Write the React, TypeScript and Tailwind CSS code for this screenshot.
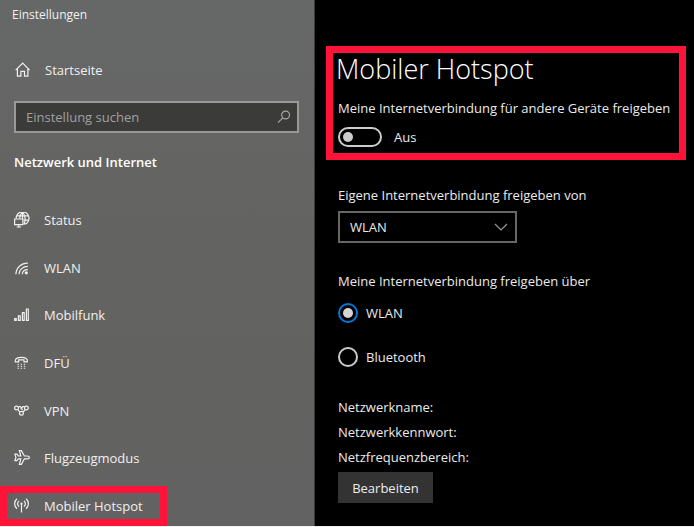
import { useState, type ReactNode } from "react";

function Icon({ children }: { children: ReactNode }) {
  return (
    <svg
      aria-hidden="true"
      viewBox="0 0 16 16"
      className="size-4 shrink-0"
      fill="none"
      stroke="currentColor"
      strokeWidth="1.2"
    >
      {children}
    </svg>
  );
}

const HomeIcon = () => (
  <Icon>
    <path d="M1.7 8.2 8.7 1.2 15.6 8.2M3.4 6.5V14.2H6.9V9.4H10.5V14.2H13.9V6.5" />
  </Icon>
);

const StatusIcon = () => (
  <Icon>
    <path d="M2.2 6.6A6.4 6.4 0 1 1 10.8 12.2M2.8 3.9H14M9.5 8.2H14.6M8.3.4C6.3 2 5.7 3.8 5.6 6.8M8.7.4C11.4 3 11.8 8.4 10 12.6M8.5.4V6.8" />
    <path d="M.6 7H8.9V12.6H.6zM4.8 12.8v2M2.6 15H7" />
  </Icon>
);

const WifiIcon = () => (
  <Icon>
    <path d="M1.9 14.3C2.2 7.8 7 3.1 13.8 3.1M5 14.3C5.2 9.6 8.8 6.4 13.8 6.4M8.3 14.3C8.5 11.6 10.6 9.6 13.8 9.6" />
    <circle cx="12.3" cy="12.8" r="1.6" fill="currentColor" stroke="none" />
  </Icon>
);

const SignalIcon = () => (
  <Icon>
    <path d="M.7 11.7H2.2V13.3H.7zM4.4 8.9H6.2V13.3H4.4zM8.4 5.7H10.2V13.3H8.4zM12.4 2H14.3V13.3H12.4z" />
  </Icon>
);

const DialIcon = () => (
  <Icon>
    <path d="M1.3 5.6C1.3 1.2 13.3 1.2 13.3 5.6V6.8H10V4.9H4.7V6.8H1.3z" />
    <path
      d="M3.6 9.3H4.9M6.7 9.3H8M9.8 9.3H11.1M3.6 11.3H4.9M6.7 11.3H8M9.8 11.3H11.1M3.6 13.3H4.9M6.7 13.3H8M9.8 13.3H11.1"
      strokeWidth="1.1"
    />
  </Icon>
);

const VpnIcon = () => (
  <Icon>
    <circle cx="2.5" cy="5" r="1.9" />
    <circle cx="12.4" cy="5" r="1.9" />
    <circle cx="7.4" cy="10.2" r="1.9" />
    <path d="M4.4 3.6H6.2L8.6 6.8M4 6.6 5.7 9M6.6 6 8.8 3.6H10.6M9.1 9 11 6.8" />
  </Icon>
);

const PlaneIcon = () => (
  <Icon>
    <path d="M5.4.6H7.4L10.4 6H13.4C16 6 16 8.8 13.4 8.8H10.4L7.4 14.4H5.4L6.8 8.8H4.4L2.8 10.6H.9L1.9 7.4.9 4.2H2.8L4.4 6H6.8z" />
  </Icon>
);

const HotspotIcon = () => (
  <Icon>
    <path d="M3 .7C-.2 3.4-.2 8 3 10.7M5 2.8C3.2 4.6 3.2 6.8 5 8.6M12 .7C15.2 3.4 15.2 8 12 10.7M10 2.8C11.8 4.6 11.8 6.8 10 8.6M7.5 5.8V14.6" />
    <circle cx="7.5" cy="5.7" r="1.1" fill="currentColor" stroke="none" />
  </Icon>
);

const navItems = [
  { label: "Status", icon: <StatusIcon /> },
  { label: "WLAN", icon: <WifiIcon /> },
  { label: "Mobilfunk", icon: <SignalIcon /> },
  { label: "DFÜ", icon: <DialIcon /> },
  { label: "VPN", icon: <VpnIcon /> },
  { label: "Flugzeugmodus", icon: <PlaneIcon /> },
  { label: "Mobiler Hotspot", icon: <HotspotIcon />, active: true },
];

function Sidebar() {
  return (
    <aside className="flex w-[315px] shrink-0 flex-col border-r border-[#3c3c3c] bg-linear-to-b from-[#666867] via-[#636361] to-[#626262] text-[#f0f0f0]">
      <div className="px-3 pt-[5px] text-[12px] leading-5">Einstellungen</div>
      <a href="#start" className="mt-[35px] flex h-5 items-center gap-[15px] pl-[14px]">
        <HomeIcon />
        Startseite
      </a>
      <form className="mr-[15px] ml-[14px] mt-[21px] flex h-8 items-center border-2 border-[#999999] bg-[#3b3b3a] pr-1.5 pl-[10px] text-[#a8a8a8]">
        <input
          type="search"
          aria-label="Einstellung suchen"
          placeholder="Einstellung suchen"
          className="min-w-0 flex-1 bg-transparent outline-none placeholder:text-[#a0a0a0]"
        />
        <svg
          aria-hidden="true"
          viewBox="0 0 14 14"
          className="size-3.5"
          fill="none"
          stroke="currentColor"
          strokeWidth="1.2"
        >
          <circle cx="8.6" cy="5" r="3.9" />
          <path d="M5.8 7.8 1 12.6" />
        </svg>
      </form>
      <h2 className="mt-[19px] pl-[14px] leading-5 font-semibold text-white">
        Netzwerk und Internet
      </h2>
      <nav aria-label="Netzwerk und Internet" className="mt-7 flex flex-1">
        <ul className="flex flex-1 flex-col justify-between">
          {navItems.map((item) => (
            <li key={item.label}>
              <a
                href="#"
                aria-current={item.active ? "page" : undefined}
                className={
                  item.active
                    ? "flex h-10 w-[167px] items-center gap-[14px] border-7 border-[#ff1439] pl-[7px] whitespace-nowrap"
                    : "flex h-10 items-center gap-[14px] pl-[14px]"
                }
              >
                {item.icon}
                {item.label}
              </a>
            </li>
          ))}
        </ul>
      </nav>
    </aside>
  );
}

function Radio({
  label,
  checked,
  onChange,
}: {
  label: string;
  checked: boolean;
  onChange: () => void;
}) {
  return (
    <label className="flex h-5 w-fit items-center gap-2">
      <input
        type="radio"
        name="share-over"
        checked={checked}
        onChange={onChange}
        className="grid size-5 appearance-none place-items-center rounded-full border-2 border-[#cccccc] before:size-[10px] before:rounded-full checked:border-[#0078d7] checked:before:bg-[#d4d4d4]"
      />
      {label}
    </label>
  );
}

export default function App() {
  const [on, setOn] = useState(false);
  const [via, setVia] = useState("WLAN");

  return (
    <div className="flex min-h-screen border-b border-[#f0f0f0] bg-black font-['Segoe_UI','Open_Sans',sans-serif] text-[13px] leading-5 text-[#ebebeb]">
      <Sidebar />
      <main className="min-w-0 flex-1 pr-2 pl-[11px]">
        <section className="mt-[46px] h-[114px] border-7 border-[#ff1439] pl-[5px]">
          <h1 className="-ml-0.5 text-[27px] leading-8 font-light text-white">Mobiler Hotspot</h1>
          <label htmlFor="share" className="mt-[13px] block whitespace-nowrap">
            Meine Internetverbindung für andere Geräte freigeben
          </label>
          <div className="mt-[9px] flex items-center gap-3">
            <input
              id="share"
              type="checkbox"
              role="switch"
              checked={on}
              onChange={() => setOn(!on)}
              className="flex h-5 w-11 appearance-none items-center rounded-full border-2 border-[#cccccc] px-[3px] before:size-[10px] before:rounded-full before:bg-[#cccccc] checked:justify-end"
            />
            <span>{on ? "Ein" : "Aus"}</span>
          </div>
        </section>
        <div className="pl-3">
          <label htmlFor="source" className="mt-[25px] block">
            Eigene Internetverbindung freigeben von
          </label>
          <div className="mt-[6px] grid h-8 w-[179px] items-center">
            <select
              id="source"
              defaultValue="WLAN"
              className="col-start-1 row-start-1 h-8 appearance-none border-2 border-[#666666] bg-black pl-[10px]"
            >
              <option>WLAN</option>
            </select>
            <svg
              aria-hidden="true"
              viewBox="0 0 14 8"
              className="pointer-events-none col-start-1 row-start-1 mr-[9px] h-2 w-3.5 justify-self-end"
              fill="none"
              stroke="#999999"
              strokeWidth="1.2"
            >
              <path d="M1 1 7 7 13 1" />
            </svg>
          </div>
          <fieldset>
            <legend className="pt-7">Meine Internetverbindung freigeben über</legend>
            <div className="mt-3 flex flex-col gap-6">
              <Radio label="WLAN" checked={via === "WLAN"} onChange={() => setVia("WLAN")} />
              <Radio
                label="Bluetooth"
                checked={via === "Bluetooth"}
                onChange={() => setVia("Bluetooth")}
              />
            </div>
          </fieldset>
          <div className="mt-7 leading-[25px]">
            <p>Netzwerkname:</p>
            <p>Netzwerkkennwort:</p>
            <p>Netzfrequenzbereich:</p>
          </div>
          <button type="button" className="mt-[2px] h-[31px] w-[95px] bg-[#333333]">
            Bearbeiten
          </button>
        </div>
      </main>
    </div>
  );
}
